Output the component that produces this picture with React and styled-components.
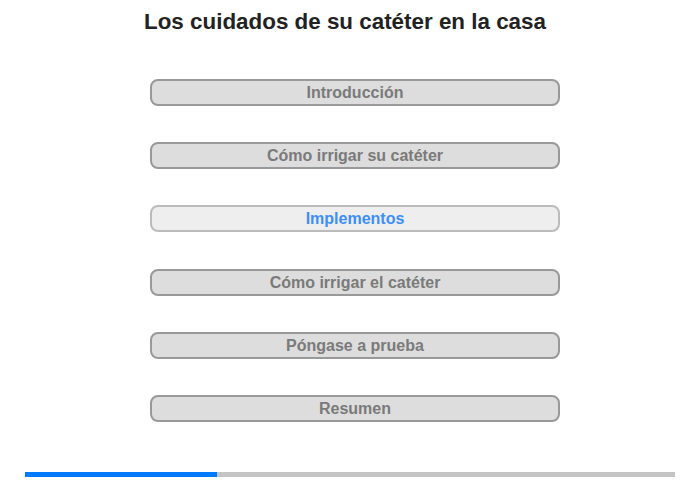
import React from "react";
import styled, { createGlobalStyle } from "styled-components";

const GlobalStyle = createGlobalStyle`
  body {
    margin: 0;
    background: #fff;
    font-family: "Liberation Sans", Arial, sans-serif;
  }
`;

const sections = [
  "Introducción",
  "Cómo irrigar su catéter",
  "Implementos",
  "Cómo irrigar el catéter",
  "Póngase a prueba",
  "Resumen"
];

const App = () => {
  const current = 2;
  const progress = 192 / 650;

  return (
    <Page>
      <GlobalStyle />
      <Title>Los cuidados de su catéter en la casa</Title>
      <Menu>
        {sections.map((label, index) => (
          <MenuButton key={label} active={index === current}>
            {label}
          </MenuButton>
        ))}
      </Menu>
      <Progress>
        <ProgressFill style={{ width: `${progress * 100}%` }} />
      </Progress>
    </Page>
  );
};

export default App;

const Page = styled.div`
  width: 700px;
  height: 480px;
  display: flex;
  flex-direction: column;
  box-sizing: border-box;
  padding-top: 9px;
`;

const Title = styled.h1`
  margin: 0 10px 0 0;
  font-size: 22.4px;
  line-height: 25px;
  font-weight: bold;
  color: #222;
  text-align: center;
`;

const Menu = styled.div`
  display: flex;
  flex-direction: column;
  gap: 36.2px;
  padding-left: 150px;
  margin-top: 45px;
`;

const MenuButton = styled.div`
  width: 410px;
  height: 27px;
  box-sizing: border-box;
  padding-top: 1px;
  border: 2px solid ${props => (props.active ? "#bbbbbb" : "#999999")};
  background: ${props => (props.active ? "#eeeeee" : "#dddddd")};
  border-radius: 8px;
  display: flex;
  align-items: center;
  justify-content: center;
  font-size: 16px;
  font-weight: bold;
  color: ${props => (props.active ? "#3d8ef8" : "#7a7a7a")};
  cursor: pointer;
`;

const Progress = styled.div`
  margin: auto 25px 3px 25px;
  height: 5px;
  background: #c4c4c4;
  display: flex;
`;

const ProgressFill = styled.div`
  height: 100%;
  background: #007bff;
`;
